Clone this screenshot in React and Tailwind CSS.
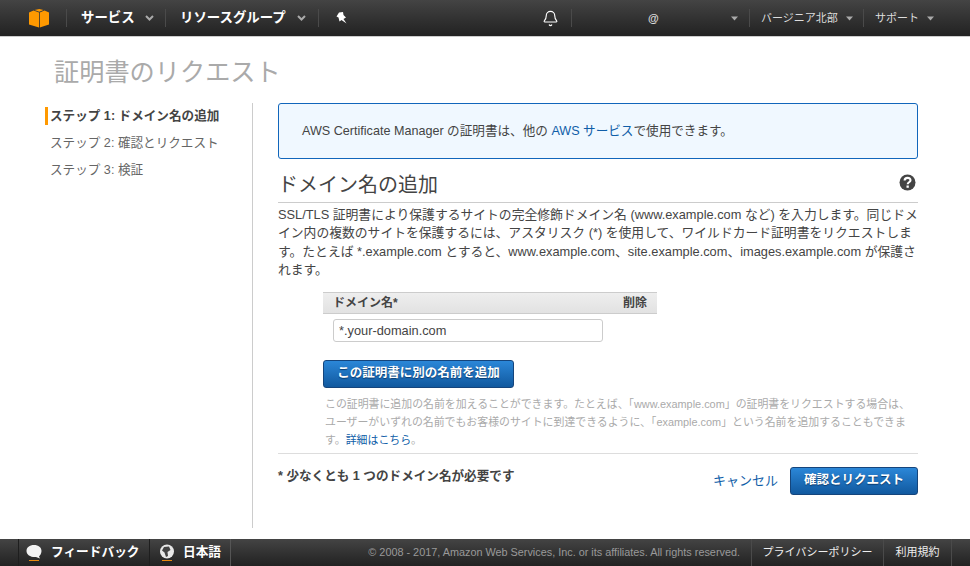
import { Bell } from 'lucide-react'

const font = "font-['Liberation_Sans','Noto_Sans_CJK_JP',sans-serif]"

function Caret({ className = '' }) {
  return (
    <svg width="9" height="6" viewBox="0 0 9 6" className={className}>
      <path d="M1 1 L4.5 4.5 L8 1" fill="none" stroke="#aaa" strokeWidth="2" />
    </svg>
  )
}

function SolidCaret() {
  return (
    <svg width="7" height="5" viewBox="0 0 7 5">
      <path d="M0 0.5 H7 L3.5 4.5 Z" fill="#aaa" />
    </svg>
  )
}

function Sep() {
  return <div className="w-px h-[18px] bg-[#4a4a4a] shrink-0" />
}

function Cube() {
  return (
    <svg width="20" height="19" viewBox="0 0 20 19">
      <path d="M0 3.5 L4.5 1.5 L10 3.5 L10 18.5 L0 15.5 Z" fill="#f90" />
      <path d="M20 3.5 L15.5 1.5 L10.8 3.5 L10.8 18.5 L20 15.5 Z" fill="#f90" />
      <path d="M5.5 1 L10.3 0 L14.5 1 L10.3 2.8 Z" fill="#f90" />
    </svg>
  )
}

function PushPin() {
  return (
    <svg width="11" height="12" viewBox="0 0 11 12">
      <path d="M3 0.5 L7 0 L7.5 3 L10 5.5 L7.5 7 L10.5 11.5 L5.5 8 L3.5 9.5 L2.5 5.5 L0.5 4.5 Z" fill="#fff" />
    </svg>
  )
}

function Header() {
  return (
    <header className="h-[37px] shrink-0 flex items-center bg-gradient-to-b from-[#444] to-[#222] border-b border-[#ccc] text-white">
      <div className="w-[66px] flex justify-end pr-[17px]"><Cube /></div>
      <Sep />
      <div className="w-[98px] flex items-center pl-[14px] text-[13.4px] font-bold">
        <span>サービス</span>
        <Caret className="ml-[10px]" />
      </div>
      <Sep />
      <div className="w-[152px] flex items-center pl-[14px] text-[13.4px] font-bold">
        <span>リソースグループ</span>
        <Caret className="ml-[11px]" />
      </div>
      <Sep />
      <div className="flex-1 pl-[17px]">
        <PushPin />
      </div>
      <div className="w-[17px] mr-[12px]"><Bell size={17} strokeWidth={1.6} /></div>
      <Sep />
      <div className="w-[177px] flex items-center text-[11px] text-[#ddd]">
        <span className="ml-[76px] font-bold">@</span>
        <span className="ml-auto mr-[11px]"><SolidCaret /></span>
      </div>
      <Sep />
      <div className="w-[113px] flex items-center pl-[11px] text-[11px] text-[#ddd]">
        <span>バージニア北部</span>
        <span className="ml-[8px]"><SolidCaret /></span>
      </div>
      <Sep />
      <div className="w-[106px] flex items-center pl-[11px] text-[11px] text-[#ddd]">
        <span>サポート</span>
        <span className="ml-[8px]"><SolidCaret /></span>
      </div>
    </header>
  )
}

function Footer() {
  return (
    <footer className="h-[27px] shrink-0 flex items-center bg-gradient-to-b from-[#444] to-[#222] text-white">
      <div className="w-[19px] h-full border-r border-[#1e1e1e]" />
      <div className="w-[131px] h-full flex items-center pl-[7px] border-r border-[#1e1e1e] text-[12.7px] font-bold whitespace-nowrap">
        <svg width="16" height="18" viewBox="0 0 16 18">
          <path d="M8 1 C12.5 1 15.5 3.5 15.5 7 C15.5 10 13.5 12 13 12.5 L14 14.5 L10 13 C5 13.5 0.5 11 0.5 7 C0.5 3.5 3.5 1 8 1 Z" fill="#f2f2f2" />
          <rect x="3" y="16" width="10" height="1" fill="#e98a10" />
        </svg>
        <span className="ml-[9px]">フィードバック</span>
      </div>
      <div className="w-[81px] h-full flex items-center pl-[9px] border-r border-[#555] text-[12.7px] font-bold">
        <svg width="16" height="18" viewBox="0 0 16 18">
          <circle cx="8" cy="7.5" r="7" fill="#e8e8e8" />
          <path d="M5 3 L10 2.5 L11.5 6 L8.5 8 L9 12 L7 13 L5.5 8.5 L3 6.5 Z" fill="#444" />
          <rect x="3" y="16" width="10" height="1" fill="#e98a10" />
        </svg>
        <span className="ml-[8px]">日本語</span>
      </div>
      <div className="flex-1 h-full flex items-center justify-end pr-[11px] text-[10.85px] text-[#999] whitespace-nowrap">
        © 2008 - 2017, Amazon Web Services, Inc. or its affiliates. All rights reserved.
      </div>
      <div className="w-[132px] h-full flex items-center justify-center border-l border-[#4a4a4a] text-[11px] text-[#eee]">
        プライバシーポリシー
      </div>
      <div className="w-[69px] h-full flex items-center justify-center border-x border-[#4a4a4a] text-[11px] text-[#eee]">
        利用規約
      </div>
      <div className="w-[18px]" />
    </footer>
  )
}

function Sidebar() {
  return (
    <nav className="w-[208px] ml-[45px] shrink-0 text-[12.6px] leading-[18px] text-[#666] pt-[4px] border-r border-[#ccc] mr-[25px]">
      <div className="border-l-[3px] border-[#f90] pl-[2px] font-bold text-[#444]">ステップ 1: ドメイン名の追加</div>
      <div className="pl-[5px] mt-[9px]">ステップ 2: 確認とリクエスト</div>
      <div className="pl-[5px] mt-[9px]">ステップ 3: 検証</div>
    </nav>
  )
}

function BlueButton({ children, className = '' }) {
  return (
    <button className={`h-[28px] rounded-[3px] border border-[#15457c] bg-gradient-to-b from-[#2b87d8] to-[#11599f] text-white font-bold text-[12.5px] [text-shadow:0_1px_1px_#0b3a6e] ${className}`}>
      {children}
    </button>
  )
}

export default function App() {
  return (
    <div className={`${font} w-[970px] h-[566px] flex flex-col bg-white overflow-hidden`}>
      <Header />
      <main className="flex-1 flex flex-col min-h-0">
        <h1 className="h-[66px] pl-[54px] pt-[17px] text-[25.2px] leading-[36px] text-[#aaa]">証明書のリクエスト</h1>
        <div className="h-[425px] flex">
          <Sidebar />
          <section className="w-[640px]">
            <div className="h-[56px] flex items-center pl-[23px] rounded-[3px] border border-[#1166bb] bg-[#f0f8ff] text-[12.6px] text-[#444]">
              <span>AWS Certificate Manager の証明書は、他の <span className="text-[#0f5ea8]">AWS サービス</span>で使用できます。</span>
            </div>
            <div className="mt-[11px] h-[33px] pt-[1px] flex items-start justify-between border-b border-[#ccc]">
              <h2 className="text-[20px] leading-[28px] text-[#444]">ドメイン名の追加</h2>
              <svg width="17" height="17" viewBox="0 0 17 17" className="mt-[3px] mr-[2px]">
                <circle cx="8.5" cy="8.5" r="8" fill="#444" />
                <path d="M5.6 6.5 C5.7 3 11.5 3 11.5 6.3 C11.5 8.3 8.7 8.2 8.7 10.2" fill="none" stroke="#fff" strokeWidth="2.1" />
                <rect x="7.5" y="11.5" width="2.3" height="2.3" fill="#fff" />
              </svg>
            </div>
            <p className="mt-[3px] text-[12.8px] leading-[18.4px] text-[#444]">
              SSL/TLS 証明書により保護するサイトの完全修飾ドメイン名 (www.example.com など) を入力します。同じドメイン内の複数のサイトを保護するには、アスタリスク (*) を使用して、ワイルドカード証明書をリクエストします。たとえば *.example.com とすると、www.example.com、site.example.com、images.example.com が保護されます。
            </p>
            <div className="ml-[45px] mt-[12px] w-[334px]">
              <div className="h-[22px] flex items-center justify-between px-[10px] bg-gradient-to-b from-[#eee] to-[#e2e2e2] border-y border-[#ccc] text-[12px] font-bold text-[#444]">
                <span>ドメイン名*</span>
                <span>削除</span>
              </div>
              <input
                readOnly
                value="*.your-domain.com"
                className="block ml-[10px] mt-[5px] w-[270px] h-[23px] px-[5px] rounded-[3px] border border-[#ccc] bg-white text-[12.8px] text-[#444]"
              />
              <BlueButton className="w-[191px] mt-[18px]">この証明書に別の名前を追加</BlueButton>
            </div>
            <p className="ml-[47px] mt-[7px] text-[10.9px] leading-[18px] text-[#aaa]">
              この証明書に追加の名前を加えることができます。たとえば、「www.example.com」の証明書をリクエストする場合は、ユーザーがいずれの名前でもお客様のサイトに到達できるように、「example.com」という名前を追加することもできます。<a className="text-[#0f5ea8]">詳細はこちら</a>。
            </p>
            <div className="mt-[4px] pt-[13px] border-t border-[#ddd] flex items-start justify-between">
              <span className="text-[12.6px] leading-[18px] font-bold text-[#444]">* 少なくとも 1 つのドメイン名が必要です</span>
              <div className="flex items-center">
                <a className="text-[13px] text-[#0f5ea8]">キャンセル</a>
                <BlueButton className="w-[128px] ml-[12px]">確認とリクエスト</BlueButton>
              </div>
            </div>
          </section>
        </div>
      </main>
      <Footer />
    </div>
  )
}
